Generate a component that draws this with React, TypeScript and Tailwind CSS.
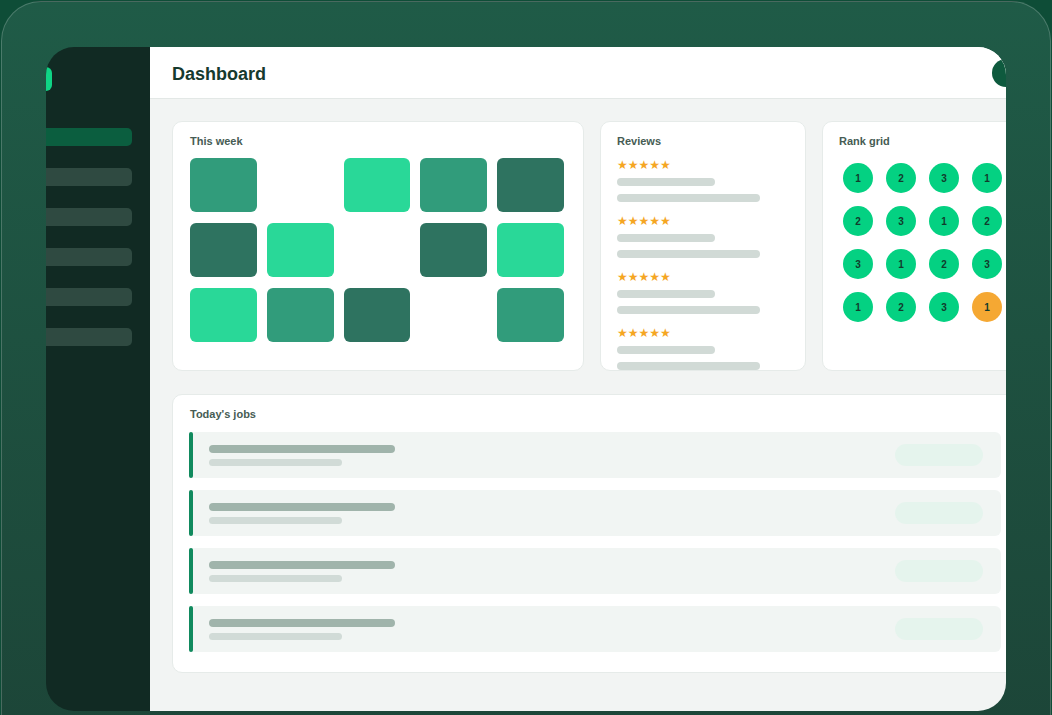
import React from "react";

const M = "bg-[#319c7b]";
const L = "bg-[#29d898]";
const D = "bg-[#2e7360]";
const E = "";

const tiles = [
  M, E, L, M, D,
  D, L, E, D, L,
  L, M, D, E, M,
];

const ranks = [1, 2, 3, 1, 2, 3, 1, 2, 3, 1, 2, 3, 1, 2, 3, 1];

function Card({ title, className, titleClass, children }: { title: string; className?: string; titleClass?: string; children?: React.ReactNode }) {
  return (
    <div className={"bg-white rounded-[10px] border border-[#e6ebe9] overflow-hidden pt-[12px] " + (className || "")}>
      <div className={"text-[11px] leading-[14px] font-bold text-[#465c54] " + (titleClass || "")}>{title}</div>
      {children}
    </div>
  );
}

export default function App() {
  return (
    <div className="w-[1052px] h-[715px] overflow-hidden bg-[#0e4d37]" style={{ fontFamily: '"Liberation Sans", Arial, sans-serif' }}>
      <div className="ml-[1px] mt-[1px] w-[1050px] h-[780px] rounded-[40px] border border-white/20 bg-gradient-to-b from-[#1f5b47] to-[#1c4437] pt-[45px] pl-[44px]">
        <div className="w-[960px] h-[664px] rounded-[28px] overflow-hidden flex">
          {/* Sidebar */}
          <div className="w-[104px] shrink-0 bg-[#112a23] overflow-hidden">
            <div className="ml-[-18px] w-[104px] pt-[20px]">
              <div className="w-[24px] h-[24px] rounded-[6px] bg-[#0fd585]" />
              <div className="mt-[37px] flex flex-col gap-[22px]">
                <div className="h-[18px] rounded-[5px] bg-[#0b5e3f]" />
                <div className="h-[18px] rounded-[5px] bg-[#2f4a41]" />
                <div className="h-[18px] rounded-[5px] bg-[#2f4a41]" />
                <div className="h-[18px] rounded-[5px] bg-[#2f4a41]" />
                <div className="h-[18px] rounded-[5px] bg-[#2f4a41]" />
                <div className="h-[18px] rounded-[5px] bg-[#2f4a41]" />
              </div>
            </div>
          </div>
          {/* Main */}
          <div className="flex-1 bg-[#f2f4f3] overflow-hidden">
            <div className="w-[890px]">
              <div className="h-[52px] bg-white border-b border-[#e3e8e6] flex items-center justify-between pl-[22px] pr-[20px]">
                <div className="text-[18px] leading-[24px] pt-[2px] font-bold text-[#163a2e]">Dashboard</div>
                <div className="w-[28px] h-[28px] rounded-full bg-[#0e5a3e]" />
              </div>
              <div className="p-[22px]">
                <div className="grid grid-cols-[412px_206px_196px] gap-x-[16px] h-[250px]">
                  <Card title="This week" className="pl-[17px]">
                    <div className="mt-[10px] w-[374px] grid grid-cols-5 gap-x-[10px] gap-y-[11px]">
                      {tiles.map((c, i) => (
                        <div key={i} className={"h-[54px] rounded-[6px] " + c} />
                      ))}
                    </div>
                  </Card>
                  <Card title="Reviews" className="pl-[16px]">
                    <div className="flex flex-col">
                      {[0, 1, 2, 3].map((i) => (
                        <div key={i} className="flex flex-col" style={{ marginTop: i === 0 ? 11 : 13 }}>
                          <div className="text-[12px] leading-[12px] text-[#f5a623]" style={{ fontFamily: '"DejaVu Sans", sans-serif' }}>★★★★★</div>
                          <div className="mt-[7px] w-[98px] h-[8px] rounded-full bg-[#d1dad6]" />
                          <div className="mt-[8px] w-[143px] h-[8px] rounded-full bg-[#d1dad6]" />
                        </div>
                      ))}
                    </div>
                  </Card>
                  <Card title="Rank grid" className="pl-[16px]">
                    <div className="mt-[15px] pl-[4px] grid grid-cols-[repeat(4,30px)] gap-[13px]">
                      {ranks.map((r, i) => (
                        <div
                          key={i}
                          className={
                            "w-[30px] h-[30px] rounded-full flex items-center justify-center text-[10px] font-bold text-[#123b2c] " +
                            (i === 15 ? "bg-[#f5a833]" : "bg-[#04d182]")
                          }
                        >
                          {r}
                        </div>
                      ))}
                    </div>
                  </Card>
                </div>
                <Card title="Today's jobs" titleClass="pl-[1px]" className="mt-[23px] h-[279px] px-[16px]">
                  <div className="mt-[11px] flex flex-col gap-[12px]">
                    {[0, 1, 2, 3].map((i) => (
                      <div key={i} className="h-[46px] rounded-[6px] bg-[#f1f5f3] flex items-center">
                        <div className="w-[4px] self-stretch rounded-full bg-[#118a5e]" />
                        <div className="pl-[16px] flex flex-col">
                          <div className="w-[186px] h-[8px] rounded-full bg-[#a0b4ab]" />
                          <div className="mt-[6px] w-[133px] h-[7px] rounded-full bg-[#d1dbd7]" />
                        </div>
                        <div className="ml-auto mr-[18px] w-[88px] h-[22px] rounded-full bg-[#e5f4ed]" />
                      </div>
                    ))}
                  </div>
                </Card>
              </div>
            </div>
          </div>
        </div>
      </div>
    </div>
  );
}
